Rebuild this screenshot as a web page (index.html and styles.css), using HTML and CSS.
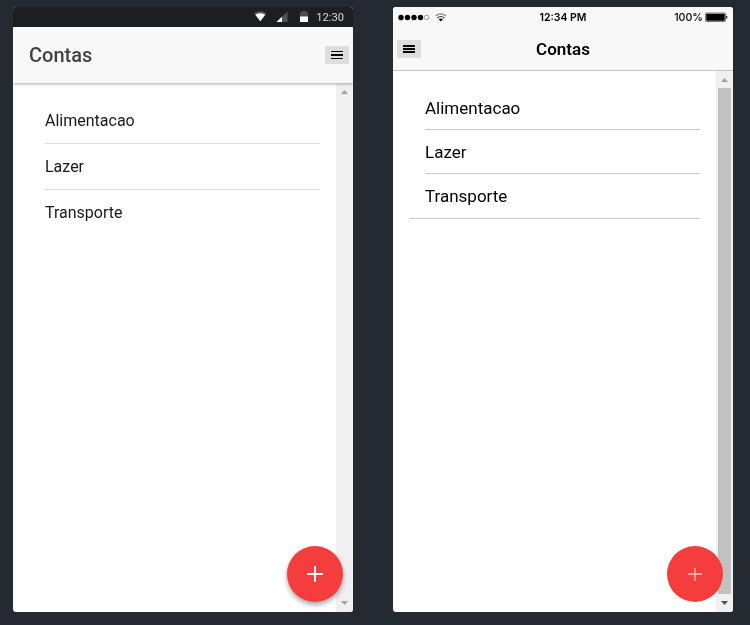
FILE: index.html
```html
<!DOCTYPE html>
<html lang="pt">
<head>
<meta charset="utf-8">
<title>Contas</title>
<link rel="stylesheet" href="styles.css">
</head>
<body>
<main class="stage">
  <section class="phone android">
    <div class="status">
      <svg class="status-icons" width="56" height="14" viewBox="0 0 56 14">
        <path d="M0 3.4Q6.3-.8 12.6 3.4L6.3 11.3Z" fill="#54575a"/>
        <path d="M1.4 4.7Q6.3 1.8 11.2 4.7L6.3 11.3Z" fill="#fff"/>
        <path d="M22.5 12 33.5 1.5V12Z" fill="#505356"/>
        <path d="M22.5 12 28 6.7V12Z" fill="#fff"/>
        <path d="M46 2h2V1h4v1h2v5h-8Z" fill="#4b4e51"/>
        <path d="M46 6.5h8V12h-8Z" fill="#fff"/>
      </svg>
      <span class="clock">12:30</span>
    </div>
    <header class="toolbar">
      <h1>Contas</h1>
      <button class="menu" aria-label="Menu"><svg width="12" height="8" viewBox="0 0 12 8"><path d="M0 0h12v1H0zM0 3h12v2H0zM0 7h12v1H0z"/></svg></button>
    </header>
    <div class="content">
      <ul class="list"><li>Alimentacao</li><li>Lazer</li><li>Transporte</li></ul>
      <div class="scrollbar">
        <svg width="7" height="4" viewBox="0 0 7 4"><path d="M0 4 3.5 0 7 4z"/></svg>
        <svg width="7" height="4" viewBox="0 0 7 4"><path d="M0 0h7L3.5 4z"/></svg>
      </div>
    </div>
    <button class="fab" aria-label="Adicionar"><svg width="16" height="16" viewBox="0 0 16 16"><path d="M7 0h2v7h7v2H9v7H7V9H0V7h7z" fill="#fff"/></svg></button>
  </section>

  <section class="phone ios">
    <div class="status">
      <svg class="signal" width="50" height="12" viewBox="0 0 50 12">
        <circle cx="3" cy="6.5" r="2.7"/><circle cx="9.5" cy="6.5" r="2.7"/><circle cx="16" cy="6.5" r="2.7"/><circle cx="22.5" cy="6.5" r="2.7"/>
        <circle cx="28.6" cy="6.5" r="2.3" fill="none" stroke="#777" stroke-width=".7"/>
        <g fill="none" stroke-width="1.2"><path d="M37.6 5Q42.8.8 48 5" stroke="#888"/><path d="M39.3 7Q42.8 4 46.3 7" stroke="#333"/></g>
        <path d="M40.7 8.3Q42.8 6.8 44.9 8.3L42.8 10.5Z"/>
      </svg>
      <span class="clock">12:34 PM</span>
      <span class="battery">100%<svg width="23" height="10" viewBox="0 0 23 10"><rect x=".5" y="1" width="20" height="8.5" rx="1" fill="none" stroke="#555" stroke-width=".8"/><path d="M1.3 1.7h18.4v7.1H1.3zM21.2 3.8l1.1.5v2l-1.1.5z"/></svg></span>
    </div>
    <header class="toolbar">
      <button class="menu" aria-label="Menu"><svg width="12" height="8" viewBox="0 0 12 8"><path d="M0 0h12v2H0zM0 3h12v2H0zM0 6h12v2H0z"/></svg></button>
      <h1>Contas</h1>
    </header>
    <div class="content">
      <ul class="list"><li>Alimentacao</li><li>Lazer</li><li>Transporte</li></ul>
      <div class="scrollbar">
        <svg width="7" height="4" viewBox="0 0 7 4"><path d="M0 4 3.5 0 7 4z"/></svg>
        <div class="thumb"></div>
        <svg class="down" width="7" height="4" viewBox="0 0 7 4"><path d="M0 0h7L3.5 4z"/></svg>
      </div>
    </div>
    <button class="fab" aria-label="Adicionar"><svg width="14" height="13" viewBox="0 0 14 13"><path d="M6.3 0h1.4v5.3H14v1.5H7.7V13H6.3V6.8H0V5.3h6.3z" fill="#ffc0c0"/></svg></button>
  </section>
</main>
</body>
</html>
```
FILE: styles.css
```css
* { box-sizing: border-box; }
body {
  margin: 0;
  background: #242a32;
  font-family: Roboto, "Liberation Sans", sans-serif;
  color: #000;
}
.stage {
  display: flex;
  gap: 40px;
  height: 625px;
  padding: 7px 17px 13px 13px;
}
.phone {
  position: relative;
  display: flex;
  flex-direction: column;
  width: 340px;
  height: 605px;
  overflow: hidden;
  border-radius: 3px;
  background: #fff;
}
h1 { margin: 0; }
button { border: 0; padding: 0; display: flex; align-items: center; justify-content: center; }
.menu { width: 24px; height: 18px; background: #ddd; }
.content { display: flex; flex: 1; min-height: 0; }
.list { flex: 1; margin: 0; padding: 0; list-style: none; }
.scrollbar {
  display: flex;
  flex-direction: column;
  align-items: center;
  justify-content: space-between;
  width: 17px;
  padding: 7px 0;
  background: #f0f0f0;
  fill: #a3a3a3;
}
.fab {
  position: absolute;
  right: 10px;
  bottom: 10px;
  width: 56px;
  height: 56px;
  border-radius: 50%;
  background: #f53d3d;
}
h1, .list, .clock, .battery { will-change: opacity; }

.android .status {
  display: flex;
  align-items: center;
  justify-content: flex-end;
  height: 20px;
  padding-right: 9px;
  background: #1b1e23;
  color: #d5d6d7;
  font-size: 11.2px;
}
.android .status-icons { margin-right: 6px; }
.android .toolbar {
  position: relative;
  display: flex;
  align-items: center;
  justify-content: space-between;
  height: 56px;
  padding: 0 4px 0 16px;
  background: #f8f8f8;
  box-shadow: 0 1px 3px rgba(0, 0, 0, .33);
}
.android h1 { color: #424242; font-size: 20px; font-weight: 500; }
.android .list { padding: 15px 16px 0 32px; color: #191919; }
.android li { height: 46px; border-bottom: 1px solid #dedede; font-size: 16px; line-height: 45px; }
.android li:last-child { border: 0; }
.android .fab { box-shadow: 0 3px 5px rgba(0, 0, 0, .35); }

.ios .status {
  display: grid;
  grid-template-columns: 1fr auto 1fr;
  align-items: center;
  height: 20px;
  padding: 0 5px;
  background: #f8f8f8;
  font-family: Inter, Roboto, sans-serif;
  font-size: 10.7px;
  font-weight: 500;
}
.ios .clock { font-size: 10.5px; font-weight: 600; }
.ios .battery { display: flex; align-items: center; justify-content: flex-end; gap: 2px; }
.ios .toolbar {
  display: grid;
  grid-template-columns: 24px 1fr 24px;
  align-items: center;
  height: 44px;
  padding: 0 4px;
  border-bottom: 1px solid #c4c4c4;
  background: #f8f8f8;
  text-align: center;
}
.ios .menu { position: relative; height: 18px; }
.ios h1 { font-size: 17px; font-weight: 600; }
.ios .list { padding: 15px 16px 0; }
.ios li { height: 44px; margin-left: 16px; border-bottom: 1px solid #c8c7cc; font-size: 17px; line-height: 44px; }
.ios li:last-child { height: 45px; margin-left: 0; padding-left: 16px; }
.ios .thumb { flex: 1; width: 13px; margin: 6px 0 7px; background: #c1c1c1; }
.ios .down { fill: #505050; }
```
